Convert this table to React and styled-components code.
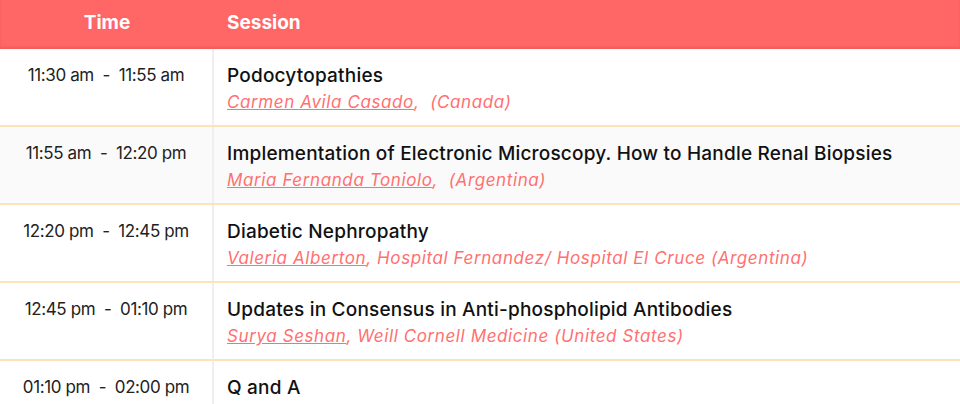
import React from "react";
import styled, { createGlobalStyle } from "styled-components";

const sessions = [
  {
    time: "11:30 am  -  11:55 am",
    title: "Podocytopathies",
    speaker: "Carmen Avila Casado",
    place: " (Canada)",
  },
  {
    time: "11:55 am  -  12:20 pm",
    title: "Implementation of Electronic Microscopy. How to Handle Renal Biopsies",
    speaker: "Maria Fernanda Toniolo",
    place: " (Argentina)",
    highlight: true,
  },
  {
    time: "12:20 pm  -  12:45 pm",
    title: "Diabetic Nephropathy",
    speaker: "Valeria Alberton",
    place: "Hospital Fernandez/ Hospital El Cruce (Argentina)",
  },
  {
    time: "12:45 pm  -  01:10 pm",
    title: "Updates in Consensus in Anti-phospholipid Antibodies",
    speaker: "Surya Seshan",
    place: "Weill Cornell Medicine (United States)",
  },
  {
    time: "01:10 pm  -  02:00 pm",
    title: "Q and A",
  },
];

function App() {
  return (
    <>
      <GlobalStyle />
      <Table>
        <HeaderRow>
          <HeadCell center>Time</HeadCell>
          <HeadCell>Session</HeadCell>
        </HeaderRow>
        {sessions.map((s, index) => (
          <Row key={index} shaded={s.highlight}>
            <TimeCell>{s.time}</TimeCell>
            <SessionCell>
              <Title>{s.title}</Title>
              {s.speaker && (
                <Speaker>
                  <SpeakerLink href="#">{s.speaker}</SpeakerLink>,&nbsp;{s.place}
                </Speaker>
              )}
            </SessionCell>
          </Row>
        ))}
      </Table>
    </>
  );
}

const GlobalStyle = createGlobalStyle`
  body {
    margin: 0;
    background: #ffffff;
    font-family: Inter, "Noto Sans", sans-serif;
  }
`;

const Table = styled.div`
  width: 960px;
  display: flex;
  flex-direction: column;
`;

const HeaderRow = styled.div`
  display: grid;
  grid-template-columns: 214px 1fr;
  height: 49px;
  align-items: center;
  background: #ff6666;
  box-shadow: inset 0 -2px 2px rgba(200, 60, 60, 0.25);
`;

const HeadCell = styled.div`
  color: #ffffff;
  font-weight: 700;
  font-size: 19px;
  text-align: ${props => (props.center ? "center" : "left")};
  padding-left: ${props => (props.center ? "0" : "13px")};
  margin-top: -4px;
`;

const Row = styled.div`
  display: grid;
  grid-template-columns: 214px 1fr;
  height: 76px;
  border-bottom: 2px solid #fde3ba;
  background: ${props => (props.shaded ? "#fafafa" : "#ffffff")};
`;

const TimeCell = styled.div`
  border-right: 2px solid #efefef;
  text-align: center;
  white-space: pre;
  font-size: 17px;
  color: #222222;
  padding-top: 16px;
  letter-spacing: -0.4px;
`;

const SessionCell = styled.div`
  padding: 14px 0 0 13px;
`;

const Title = styled.div`
  font-size: 19px;
  font-weight: 500;
  color: #111111;
  line-height: 25px;
  letter-spacing: 0.2px;
`;

const Speaker = styled.div`
  font-size: 17px;
  font-style: italic;
  color: #ff7070;
  line-height: 22px;
  margin-top: 3px;
  letter-spacing: 0.6px;
`;

const SpeakerLink = styled.a`
  color: #ff7070;
  text-decoration: underline;
`;

export default App;
